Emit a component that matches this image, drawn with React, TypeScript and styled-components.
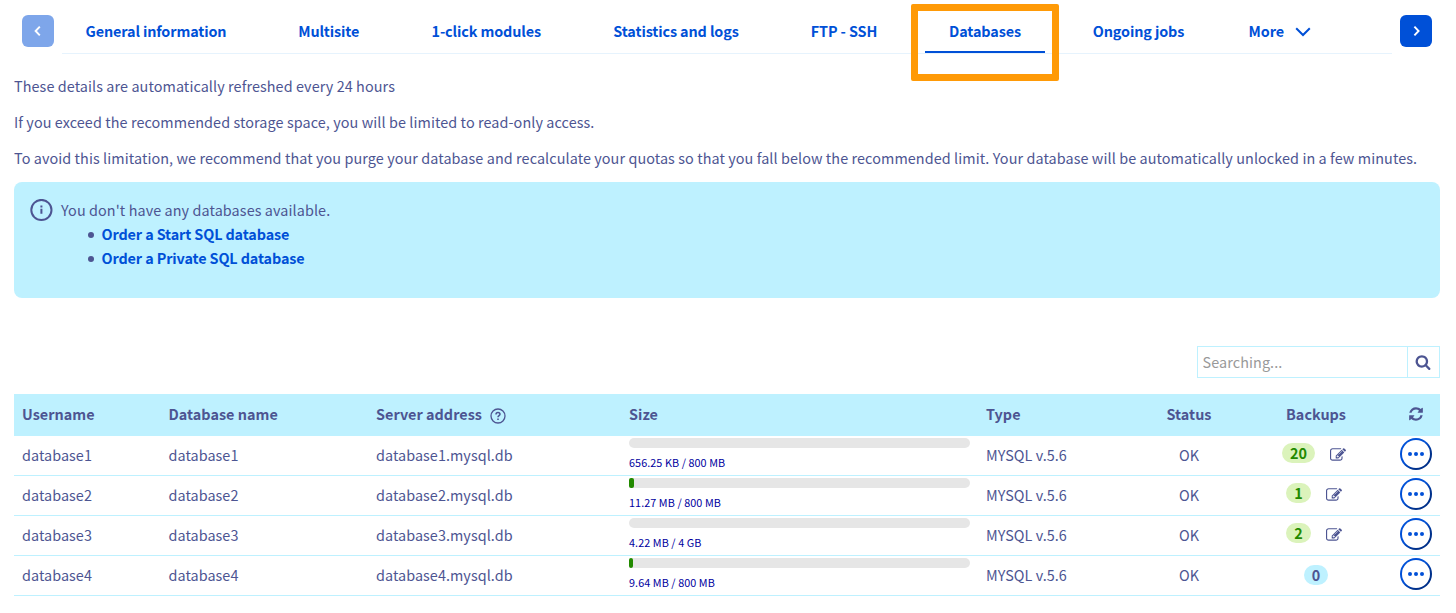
import React from "react";
import styled, { createGlobalStyle } from "styled-components";

const c = {
  primary: "#0050d7",
  text: "#4d5592",
  pale: "#bef1ff",
};

const GlobalStyle = createGlobalStyle`
  * { box-sizing: border-box; }
  body {
    margin: 0;
    background: #fff;
    color: ${c.text};
    font-family: "Noto Sans CJK SC", "Open Sans", sans-serif;
    font-size: 14.4px;
    line-height: 24px;
  }
`;

const Page = styled.main`
  width: 1456px;
  height: 613px;
  padding: 15px 16px 0 14px;
  overflow: hidden;
`;

const TabBar = styled.nav`
  display: flex;
  gap: 8px;
  padding: 0 8px;
  height: 39px;
`;

const NavButton = styled.button<{ $disabled?: boolean }>`
  display: flex;
  align-items: center;
  justify-content: center;
  width: 32px;
  height: 32px;
  padding: 0;
  border: 0;
  border-radius: 6px;
  color: #fff;
  background: ${c.primary};
  opacity: ${(p) => (p.$disabled ? 0.5 : 1)};
`;

const TabList = styled.div`
  display: flex;
  flex: 1;
  gap: 24px;
  height: 39px;
  border-bottom: 1px solid #e6f3fd;
`;

const Tab = styled.a<{ $width: number; $active?: boolean }>`
  position: relative;
  display: flex;
  flex: none;
  align-items: center;
  justify-content: center;
  gap: 11.5px;
  width: ${(p) => p.$width}px;
  height: 38px;
  padding-bottom: 5px;
  border-bottom: 2px solid ${(p) => (p.$active ? c.primary : "transparent")};
  color: ${c.primary};
  font-weight: 700;
  letter-spacing: -0.12px;
  white-space: nowrap;

  & > svg { margin-top: 2px; }
`;

const Highlight = styled.span`
  position: absolute;
  top: -11px;
  left: -14px;
  width: 148px;
  height: 77px;
  border: 7px solid #ff9a07;
  border-radius: 2px;
`;

const Intro = styled.section`
  padding-top: 20px;
`;

const Paragraph = styled.p`
  margin: 0 0 12px;
  letter-spacing: 0.083px;
  white-space: nowrap;
`;

const Notice = styled.section`
  display: flex;
  gap: 8px;
  height: 116px;
  padding: 16px;
  border-radius: 8px;
  background: ${c.pale};

  & > svg { margin-top: 1px; }
`;

const NoticeBody = styled.div`
  letter-spacing: 0.09px;
`;

const OrderList = styled.ul`
  margin: 0;
  padding: 0 0 0 27px;
  list-style: none;
`;

const OrderItem = styled.li`
  display: flex;
  align-items: center;
  gap: 7.5px;
  height: 24px;

  &::before {
    content: "";
    width: 6px;
    height: 6px;
    margin-top: 2px;
    border-radius: 50%;
    background: ${c.text};
  }
`;

const OrderLink = styled.a`
  color: ${c.primary};
  font-weight: 700;
  letter-spacing: -0.12px;
`;

const SearchBox = styled.div`
  display: flex;
  width: 243px;
  height: 32px;
  margin: 48px 0 16px auto;
  border: 1px solid ${c.pale};
`;

const SearchInput = styled.input`
  flex: 1;
  min-width: 0;
  padding: 0 4.5px;
  border: 0;
  background: transparent;
  color: ${c.text};
  font: inherit;
  letter-spacing: 0.09px;
  line-height: 24px;

  &::placeholder { color: #999; opacity: 1; }
`;

const SearchButton = styled.button`
  display: flex;
  align-items: center;
  justify-content: center;
  width: 32px;
  padding: 0 1px 0 0;
  border: 0;
  border-left: 1px solid ${c.pale};
  background: #fff;
  color: ${c.text};
`;

const Row = styled.div<{ $head?: boolean }>`
  display: grid;
  grid-template-columns: 146.5px 207.5px 253px 357px 160px 102px 152px 48px;
  height: ${(p) => (p.$head ? 42 : 40)}px;
  letter-spacing: ${(p) => (p.$head ? 0.02 : 0.05)}px;
  ${(p) =>
    p.$head
      ? `background: ${c.pale}; font-weight: 700;`
      : `border-bottom: 1px solid ${c.pale};`}
`;

const Cell = styled.div<{ $center?: boolean }>`
  display: flex;
  align-items: center;
  justify-content: ${(p) => (p.$center ? "center" : "flex-start")};
  gap: 8px;
  padding: 0 8px 2px;
  white-space: nowrap;
`;

const SizeCell = styled.div`
  padding: 2px 8px 0;
`;

const Track = styled.div`
  height: 10px;
  border-radius: 5px;
  background: #e6e6e6;
`;

const Fill = styled.div`
  height: 10px;
  border-radius: 2px;
  background: #228a00;
`;

const SizeLabel = styled.div`
  margin-top: 6px;
  color: #00009e;
  font-size: 10.8px;
  letter-spacing: 0.08px;
  line-height: 16px;
`;

const BackupCell = styled.div<{ $empty: boolean }>`
  display: flex;
  align-items: flex-start;
  justify-content: center;
  gap: 15px;
  padding: ${(p) => (p.$empty ? "9px 0 0" : "7px 4px 0 0")};
`;

const Badge = styled.span<{ $empty: boolean }>`
  display: flex;
  align-items: center;
  justify-content: center;
  min-width: 24.5px;
  height: 20px;
  padding: 0 8px;
  border-radius: 10px;
  background: ${(p) => (p.$empty ? c.pale : "#dbf3bb")};
  color: ${(p) => (p.$empty ? c.text : "#228a00")};
  font-weight: 700;
  line-height: 20px;
`;

const ActionCell = styled.div`
  display: flex;
  justify-content: center;
  padding-top: 2px;
`;

const MenuButton = styled.button`
  display: flex;
  align-items: center;
  justify-content: center;
  width: 32px;
  height: 32px;
  padding: 0;
  border: 2px solid transparent;
  border-radius: 50%;
  background:
    linear-gradient(#fff, #fff) padding-box,
    linear-gradient(135deg, #0050d7 45%, #00308a 70%) border-box;
`;

const Icon = styled.svg`
  display: block;
  flex: none;
`;

const EditSlot = styled.span`
  padding-top: 4px;
`;

const Chevron = ({ flip }: { flip?: boolean }) => (
  <Icon width="8" height="12" viewBox="0 0 8 12" fill="none" stroke="currentColor" strokeWidth="1.9">
    <path d={flip ? "M5.8 1.6 1.6 6l4.2 4.4" : "M2.4 1.6 6.6 6l-4.2 4.4"} />
  </Icon>
);

const ChevronDown = () => (
  <Icon width="16" height="10" viewBox="0 0 16 10" fill="none" stroke="currentColor" strokeWidth="2">
    <path d="M1.2 1.3 8 8l6.8-6.7" />
  </Icon>
);

const InfoIcon = () => (
  <Icon width="23" height="23" viewBox="0 0 23 23" fill="none" stroke={c.text} strokeWidth="2">
    <circle cx="11.4" cy="11" r="10.1" />
    <path d="M11.4 9.7v5.1M11.4 6.5v1.9" />
  </Icon>
);

const HelpIcon = () => (
  <Icon width="16" height="20" viewBox="0 0 16 20" fill="none" stroke="currentColor" strokeWidth="1.3">
    <circle cx="8" cy="12" r="7" />
    <path d="M6 10.4c0-1.3.9-2 2-2s2 .7 2 1.8c0 1.4-2 1.5-2 3" strokeWidth="1.5" />
    <path d="M8 14.4v1.5" strokeWidth="1.6" />
  </Icon>
);

const SearchIcon = () => (
  <Icon width="16" height="16" viewBox="0 0 1792 1792" fill="currentColor">
    <path d="M1216 832q0-185-131.5-316.5t-316.5-131.5-316.5 131.5-131.5 316.5 131.5 316.5 316.5 131.5 316.5-131.5 131.5-316.5zm512 832q0 52-38 90t-90 38q-54 0-90-38l-343-342q-179 124-399 124-143 0-273.5-55.5t-225-150-150-225-55.5-273.5 55.5-273.5 150-225 225-150 273.5-55.5 273.5 55.5 225 150 150 225 55.5 273.5q0 220-124 399l343 343q37 37 37 90z" />
  </Icon>
);

const RefreshIcon = () => (
  <Icon width="16" height="16" viewBox="0 0 1792 1792" fill="currentColor">
    <path d="M1639 1056q0 5-1 7-64 268-268 434.5t-478 166.5q-146 0-282.5-55t-243.5-157l-129 129q-19 19-45 19t-45-19-19-45v-448q0-26 19-45t45-19h448q26 0 45 19t19 45-19 45l-137 137q71 66 161 102t187 36q134 0 250-65t186-179q11-17 53-117 8-23 30-23h192q13 0 22.5 9.5t9.5 22.5zm25-800v448q0 26-19 45t-45 19h-448q-26 0-45-19t-19-45 19-45l138-138q-148-137-349-137-134 0-250 65t-186 179q-11 17-53 117-8 23-30 23h-199q-13 0-22.5-9.5t-9.5-22.5v-7q65-268 270-434.5t480-166.5q146 0 284 55.5t245 156.5l130-129q19-19 45-19t45 19 19 45z" />
  </Icon>
);

const EditIcon = () => (
  <Icon width="16" height="16" viewBox="0 0 1792 1792" fill="currentColor">
    <path d="M888 1184l116-116-152-152-116 116v56h96v96h56zm440-720q-16-16-33 1l-350 350q-17 17-1 33t33-1l350-350q17-17 1-33zm80 594v190q0 119-84.5 203.5t-203.5 84.5h-832q-119 0-203.5-84.5t-84.5-203.5v-832q0-119 84.5-203.5t203.5-84.5h832q63 0 117 25 15 7 18 23 3 17-9 29l-49 49q-14 14-32 8-23-6-45-6h-832q-66 0-113 47t-47 113v832q0 66 47 113t113 47h832q66 0 113-47t47-113v-126q0-13 9-22l64-64q15-15 35-7t20 29zm-96-738l288 288-672 672h-288v-288zm444 132l-92 92-288-288 92-92q28-28 68-28t68 28l152 152q28 28 28 68t-28 68z" />
  </Icon>
);

const Dots = () => (
  <Icon width="18" height="6" viewBox="0 0 18 6" fill={c.primary}>
    <circle cx="3" cy="3" r="2" />
    <circle cx="9" cy="3" r="2" />
    <circle cx="15" cy="3" r="2" />
  </Icon>
);

const tabs = [
  { label: "General information", width: 188 },
  { label: "Multisite", width: 109.5 },
  { label: "1-click modules", width: 157.5 },
  { label: "Statistics and logs", width: 174 },
  { label: "FTP - SSH", width: 114 },
  { label: "Databases", width: 120, active: true },
  { label: "Ongoing jobs", width: 139 },
];

const rows = [
  { id: 1, size: "656.25 KB / 800 MB", fill: 0, backups: 20 },
  { id: 2, size: "11.27 MB / 800 MB", fill: 5, backups: 1 },
  { id: 3, size: "4.22 MB / 4 GB", fill: 0, backups: 2 },
  { id: 4, size: "9.64 MB / 800 MB", fill: 4, backups: 0 },
];

export default function App() {
  return (
    <>
      <GlobalStyle />
      <Page>
        <TabBar>
          <NavButton $disabled aria-label="Previous"><Chevron flip /></NavButton>
          <TabList>
            {tabs.map((t) => (
              <Tab key={t.label} $width={t.width} $active={t.active}>
                {t.label}
                {t.active && <Highlight />}
              </Tab>
            ))}
            <Tab $width={96}>More <ChevronDown /></Tab>
          </TabList>
          <NavButton aria-label="Next"><Chevron /></NavButton>
        </TabBar>

        <Intro>
          <Paragraph>These details are automatically refreshed every 24 hours</Paragraph>
          <Paragraph>If you exceed the recommended storage space, you will be limited to read-only access.</Paragraph>
          <Paragraph>
            To avoid this limitation, we recommend that you purge your database and recalculate your quotas so that you
            fall below the recommended limit. Your database will be automatically unlocked in a few minutes.
          </Paragraph>
        </Intro>

        <Notice>
          <InfoIcon />
          <NoticeBody>
            You don't have any databases available.
            <OrderList>
              <OrderItem><OrderLink>Order a Start SQL database</OrderLink></OrderItem>
              <OrderItem><OrderLink>Order a Private SQL database</OrderLink></OrderItem>
            </OrderList>
          </NoticeBody>
        </Notice>

        <SearchBox>
          <SearchInput placeholder="Searching..." />
          <SearchButton aria-label="Search"><SearchIcon /></SearchButton>
        </SearchBox>

        <Row $head>
          <Cell>Username</Cell>
          <Cell>Database name</Cell>
          <Cell>Server address <HelpIcon /></Cell>
          <Cell>Size</Cell>
          <Cell>Type</Cell>
          <Cell $center>Status</Cell>
          <Cell $center>Backups</Cell>
          <Cell $center><RefreshIcon /></Cell>
        </Row>
        {rows.map((r) => (
          <Row key={r.id}>
            <Cell>database{r.id}</Cell>
            <Cell>database{r.id}</Cell>
            <Cell>database{r.id}.mysql.db</Cell>
            <SizeCell>
              <Track><Fill style={{ width: r.fill }} /></Track>
              <SizeLabel>{r.size}</SizeLabel>
            </SizeCell>
            <Cell>MYSQL v.5.6</Cell>
            <Cell $center>OK</Cell>
            <BackupCell $empty={r.backups === 0}>
              <Badge $empty={r.backups === 0}>{r.backups}</Badge>
              {r.backups > 0 && <EditSlot><EditIcon /></EditSlot>}
            </BackupCell>
            <ActionCell>
              <MenuButton aria-label="Actions"><Dots /></MenuButton>
            </ActionCell>
          </Row>
        ))}
      </Page>
    </>
  );
}
